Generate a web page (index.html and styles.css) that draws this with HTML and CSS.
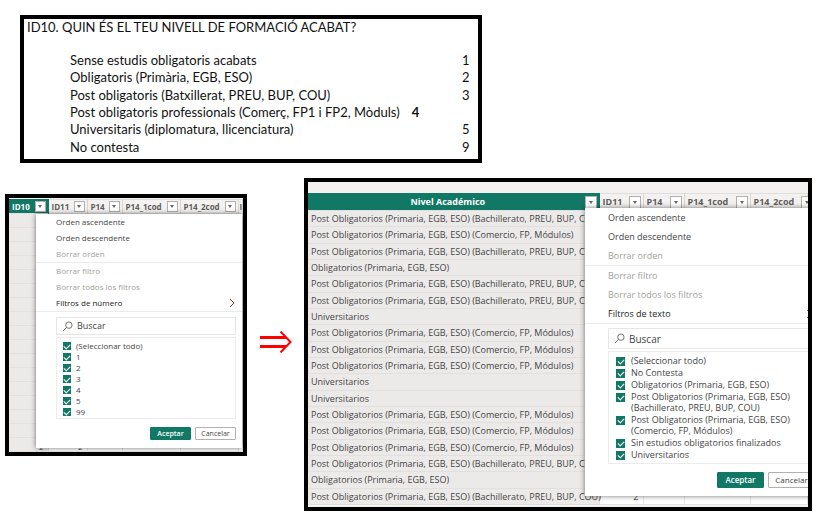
FILE: index.html
```
<!DOCTYPE html>
<html lang="ca">
<head>
<meta charset="utf-8">
<title>Nivell de formació</title>
<link rel="stylesheet" href="styles.css">
</head>
<body>
<section class="question">
  <h1>ID10. QUIN ÉS EL TEU NIVELL DE FORMACIÓ ACABAT?</h1>
  <table class="answers">
    <tr><td>Sense estudis obligatoris acabats</td><td>1</td></tr>
    <tr><td>Obligatoris (Primària, EGB, ESO)</td><td>2</td></tr>
    <tr><td>Post obligatoris (Batxillerat, PREU, BUP, COU)</td><td>3</td></tr>
    <tr><td colspan="2" class="inline-code">Post obligatoris professionals (Comerç, FP1 i FP2, Mòduls)<b>4</b></td></tr>
    <tr><td>Universitaris (diplomatura, llicenciatura)</td><td>5</td></tr>
    <tr><td>No contesta</td><td>9</td></tr>
  </table>
</section>

<main class="compare" lang="es">
  <section class="panel before">
    <table class="grid">
      <colgroup><col class="c-id"><col class="c-id11"><col class="c-p14"><col class="c-cod"><col class="c-cod"><col></colgroup>
      <thead><tr>
        <th class="active"><div><span>ID10</span><button class="drop" aria-label="Filtrar ID10"></button></div></th>
        <th><div><span>ID11</span><button class="drop" aria-label="Filtrar ID11"></button></div></th>
        <th><div><span>P14</span><button class="drop" aria-label="Filtrar P14"></button></div></th>
        <th><div><span>P14_1cod</span><button class="drop" aria-label="Filtrar P14_1cod"></button></div></th>
        <th><div><span>P14_2cod</span><button class="drop" aria-label="Filtrar P14_2cod"></button></div></th>
        <th class="cut"><div><span>I</span></div></th>
      </tr></thead>
      <tbody>
        <tr><td></td><td></td><td></td><td></td><td></td><td></td></tr>
        <tr><td></td><td></td><td></td><td></td><td></td><td></td></tr>
        <tr><td></td><td></td><td></td><td></td><td></td><td></td></tr>
        <tr><td></td><td></td><td></td><td></td><td></td><td></td></tr>
        <tr><td></td><td></td><td></td><td></td><td></td><td></td></tr>
        <tr><td></td><td></td><td></td><td></td><td></td><td></td></tr>
        <tr><td></td><td></td><td></td><td></td><td></td><td></td></tr>
        <tr><td></td><td></td><td></td><td></td><td></td><td></td></tr>
        <tr><td></td><td></td><td></td><td></td><td></td><td></td></tr>
        <tr><td></td><td></td><td></td><td></td><td></td><td></td></tr>
        <tr><td></td><td></td><td></td><td></td><td></td><td></td></tr>
        <tr><td></td><td></td><td></td><td></td><td></td><td></td></tr>
        <tr><td></td><td></td><td></td><td></td><td></td><td></td></tr>
        <tr><td></td><td></td><td></td><td></td><td></td><td></td></tr>
        <tr><td></td><td></td><td></td><td></td><td></td><td></td></tr>
        <tr><td></td><td></td><td></td><td></td><td></td><td></td></tr>
        <tr><td>2</td><td>2</td><td></td><td></td><td></td><td></td></tr>
      </tbody>
    </table>
    <div class="menu">
      <div class="group">
        <button class="item">Orden ascendente</button>
        <button class="item">Orden descendente</button>
        <button class="item" disabled>Borrar orden</button>
      </div>
      <div class="group">
        <button class="item" disabled>Borrar filtro</button>
        <button class="item" disabled>Borrar todos los filtros</button>
        <button class="item strong">Filtros de número
          <svg class="chevron" viewBox="0 0 6 10"><path d="M1 1l4 4-4 4"/></svg></button>
      </div>
      <div class="filter">
        <label class="search">
          <svg viewBox="0 0 12 12"><circle cx="7.5" cy="4.5" r="3.5"/><path d="M5 7L1 11"/></svg>
          <input type="text" placeholder="Buscar" aria-label="Buscar">
        </label>
        <div class="options">
          <label><input type="checkbox" checked>(Seleccionar todo)</label>
          <label><input type="checkbox" checked>1</label>
          <label><input type="checkbox" checked>2</label>
          <label><input type="checkbox" checked>3</label>
          <label><input type="checkbox" checked>4</label>
          <label><input type="checkbox" checked>5</label>
          <label><input type="checkbox" checked>99</label>
        </div>
        <div class="actions"><button class="primary">Aceptar</button><button>Cancelar</button></div>
      </div>
    </div>
  </section>

  <svg class="arrow" viewBox="0 0 32 22"><path d="M0 6.5H26M0 15.5H26"/><path class="tip" d="M20.500 .5L30.500 11 20.500 21.500"/></svg>

  <section class="panel after">
    <table class="grid">
      <colgroup><col class="c-id"><col class="c-id11"><col class="c-p14"><col class="c-cod"><col></colgroup>
      <thead><tr>
        <th class="active"><div><span>Nivel Académico</span><button class="drop" aria-label="Filtrar Nivel Académico"></button></div></th>
        <th><div><span>ID11</span><button class="drop" aria-label="Filtrar ID11"></button></div></th>
        <th><div><span>P14</span><button class="drop" aria-label="Filtrar P14"></button></div></th>
        <th><div><span>P14_1cod</span><button class="drop" aria-label="Filtrar P14_1cod"></button></div></th>
        <th class="cut"><div><span>P14_2cod</span><button class="drop" aria-label="Filtrar P14_2cod"></button></div></th>
      </tr></thead>
      <tbody>
        <tr><td>Post Obligatorios (Primaria, EGB, ESO) (Bachillerato, PREU, BUP, COU)</td><td></td><td></td><td></td><td></td></tr>
        <tr><td>Post Obligatorios (Primaria, EGB, ESO) (Comercio, FP, Módulos)</td><td></td><td></td><td></td><td></td></tr>
        <tr><td>Post Obligatorios (Primaria, EGB, ESO) (Bachillerato, PREU, BUP, COU)</td><td></td><td></td><td></td><td></td></tr>
        <tr><td>Obligatorios (Primaria, EGB, ESO)</td><td></td><td></td><td></td><td></td></tr>
        <tr><td>Post Obligatorios (Primaria, EGB, ESO) (Bachillerato, PREU, BUP, COU)</td><td></td><td></td><td></td><td></td></tr>
        <tr><td>Post Obligatorios (Primaria, EGB, ESO) (Bachillerato, PREU, BUP, COU)</td><td></td><td></td><td></td><td></td></tr>
        <tr><td>Universitarios</td><td></td><td></td><td></td><td></td></tr>
        <tr><td>Post Obligatorios (Primaria, EGB, ESO) (Comercio, FP, Módulos)</td><td></td><td></td><td></td><td></td></tr>
        <tr><td>Post Obligatorios (Primaria, EGB, ESO) (Comercio, FP, Módulos)</td><td></td><td></td><td></td><td></td></tr>
        <tr><td>Post Obligatorios (Primaria, EGB, ESO) (Comercio, FP, Módulos)</td><td></td><td></td><td></td><td></td></tr>
        <tr><td>Universitarios</td><td></td><td></td><td></td><td></td></tr>
        <tr><td>Universitarios</td><td></td><td></td><td></td><td></td></tr>
        <tr><td>Post Obligatorios (Primaria, EGB, ESO) (Comercio, FP, Módulos)</td><td></td><td></td><td></td><td></td></tr>
        <tr><td>Post Obligatorios (Primaria, EGB, ESO) (Comercio, FP, Módulos)</td><td></td><td></td><td></td><td></td></tr>
        <tr><td>Post Obligatorios (Primaria, EGB, ESO) (Comercio, FP, Módulos)</td><td></td><td></td><td></td><td></td></tr>
        <tr><td>Post Obligatorios (Primaria, EGB, ESO) (Bachillerato, PREU, BUP, COU)</td><td></td><td></td><td></td><td></td></tr>
        <tr><td>Obligatorios (Primaria, EGB, ESO)</td><td></td><td></td><td></td><td></td></tr>
        <tr><td>Post Obligatorios (Primaria, EGB, ESO) (Bachillerato, PREU, BUP, COU)</td><td>2</td><td></td><td></td><td></td></tr>
      </tbody>
    </table>
    <div class="menu">
      <div class="group">
        <button class="item">Orden ascendente</button>
        <button class="item">Orden descendente</button>
        <button class="item" disabled>Borrar orden</button>
      </div>
      <div class="group">
        <button class="item" disabled>Borrar filtro</button>
        <button class="item" disabled>Borrar todos los filtros</button>
        <button class="item strong">Filtros de texto
          <svg class="chevron" viewBox="0 0 6 10"><path d="M1 1l4 4-4 4"/></svg></button>
      </div>
      <div class="filter">
        <label class="search">
          <svg viewBox="0 0 12 12"><circle cx="7.5" cy="4.5" r="3.5"/><path d="M5 7L1 11"/></svg>
          <input type="text" placeholder="Buscar" aria-label="Buscar">
        </label>
        <div class="options">
          <label><input type="checkbox" checked>(Seleccionar todo)</label>
          <label><input type="checkbox" checked>No Contesta</label>
          <label><input type="checkbox" checked>Obligatorios (Primaria, EGB, ESO)</label>
          <label><input type="checkbox" checked><span>Post Obligatorios (Primaria, EGB, ESO)<br>(Bachillerato, PREU, BUP, COU)</span></label>
          <label><input type="checkbox" checked><span>Post Obligatorios (Primaria, EGB, ESO)<br>(Comercio, FP, Módulos)</span></label>
          <label><input type="checkbox" checked>Sin estudios obligatorios finalizados</label>
          <label><input type="checkbox" checked>Universitarios</label>
        </div>
        <div class="actions"><button class="primary">Aceptar</button><button>Cancelar</button></div>
      </div>
    </div>
  </section>
</main>
</body>
</html>
```
FILE: styles.css
```
* { box-sizing: border-box; }

body {
  margin: 0;
  padding: 15px 23px 20px 5px;
  background: #fff;
  color: #444;
  font: 9px/16px "Open Sans", sans-serif;
}

button, input { font: inherit; color: inherit; margin: 0; padding: 0; }
table { border-collapse: collapse; border-spacing: 0; }

/* Survey question */
.question {
  width: 57.2%;
  margin-left: 15px;
  padding: 0 8px 3px 3px;
  border: 4px solid #000;
  color: #111;
  font: 13px/17px Lato, sans-serif;
}
.question h1 { margin: 0 0 16px; font: inherit; }
.answers { width: calc(100% - 43px); height: 104px; margin-left: 43px; }
.answers td { padding: 0; white-space: nowrap; }
.answers td:last-child { text-align: right; }
.answers .inline-code:last-child { text-align: left; }
.inline-code b { margin-left: 12px; }

/* Before / after comparison */
.compare {
  display: grid;
  grid-template-columns: 242fr 57fr 508fr;
  align-items: start;
  margin-top: 15px;
}
.panel { position: relative; overflow: hidden; border: 4px solid #000; background: #f3f2f1; }
.before { margin-top: 16px; padding-top: 1px; font-size: 8px; line-height: 10px; }
.after { padding-top: 11px; padding-bottom: 2px; }

.arrow { width: 32px; height: 22px; margin: 153px auto 0; fill: none; stroke: #f00; stroke-width: 3; }
.arrow .tip { stroke-width: 2; }

/* Data grid */
.grid { width: 100%; table-layout: fixed; }
.grid th {
  padding: 0;
  background: #f3f2f1;
  border-top: 1px solid #e1dfdd;
  border-right: 1px solid #d8d6d4;
  color: #605e5c;
  text-align: left;
}
.grid th div { display: flex; align-items: center; justify-content: space-between; padding: 0 2px 0 3px; }
.grid th.active { background: #117865; border-color: #117865; color: #fff; }
.grid td { padding: 0 4px; background: #fff; border: 1px solid #e6e4e2; text-align: right; white-space: nowrap; }
.grid td:first-child { background: #eceae9; border-color: #e2e0de; border-left: 0; }
.drop {
  display: flex;
  flex: none;
  align-items: center;
  justify-content: center;
  width: 11px;
  height: 11px;
  border: 1px solid #b3b0ad;
  background: #fff;
}
.drop::after { content: ""; border: 2px solid transparent; border-top: 3px solid #666; border-bottom: 0; }

.before th { height: 14px; }
.before .cut div { padding: 0 1px; }
.before td { height: 14px; line-height: 8px; vertical-align: bottom; }
.before .c-id { width: 39px; }
.before .c-id11 { width: 39px; }
.before .c-p14 { width: 35px; }
.before .c-cod { width: 58px; }

.after .grid { height: 312px; }
.after th { height: 16px; }
.after td { height: 16px; padding-top: 1px; line-height: 14px; }
.after td:first-child { padding: 1px 2px 0 3px; text-align: left; }
.after .active span { flex: 1; text-align: center; }
.after .drop { width: 12px; height: 13px; }
.after .cut div { justify-content: flex-start; gap: 7px; }
.after .c-id { width: 291px; }
.after .c-id11 { width: 44px; }
.after .c-p14 { width: 41px; }
.after .c-cod { width: 66px; }

/* Filter menu */
.menu { position: absolute; background: #fff; box-shadow: 0 0 5px rgba(0, 0, 0, .55); }
.before .menu { top: 16px; left: 27px; right: 1px; }
.after .menu { top: 26px; left: 277px; right: -14px; }
.group { border-bottom: 1px solid #ececec; }
.item {
  display: flex;
  align-items: center;
  justify-content: space-between;
  width: 100%;
  border: 0;
  background: none;
  text-align: left;
}
.item:disabled { color: #a19f9d; }
.item.strong { color: #222; }
.before .item { height: 16px; padding: 0 7px 0 20px; }
.after .item { height: 19px; padding: 0 10px 0 23px; }
.chevron { width: 6px; height: 10px; fill: none; stroke: #a4262c; }
.after .chevron { stroke: #666; }

.before .filter { padding: 5px 6px 8px 20px; }
.after .filter { padding: 4px 7px 8px 23px; }
.search { display: flex; align-items: center; gap: 4px; border: 1px solid #e6e6e6; padding-left: 5px; }
.search svg { width: 11px; height: 11px; fill: none; stroke: #666; }
.search input { flex: 1; min-width: 0; border: 0; outline: 0; background: none; }
.search input::placeholder { color: #444; opacity: 1; }
.before .search { height: 18px; font-size: 9px; }
.after .search { height: 21px; font-size: 10px; }
.options { display: flex; flex-direction: column; margin-top: 2px; border: 1px solid #ececec; padding: 3px 6px; }
.options label { display: flex; align-items: flex-start; gap: 6px; }
.before .options { height: 82px; padding-top: 2px; line-height: 11px; }
.before .options label { gap: 5px; }
.after .options { height: 113px; gap: 1px; padding: 3px 7px; line-height: 11px; }
.options input {
  display: flex;
  flex: none;
  justify-content: center;
  appearance: none;
  width: 8px;
  height: 8px;
  margin-top: 2px;
  background: #117865;
}
.after .options input { width: 9px; height: 9px; }
.options input::after {
  content: "";
  width: 3px;
  height: 5px;
  margin-top: 1px;
  border: solid #fff;
  border-width: 0 1px 1px 0;
  transform: rotate(45deg);
}
.actions { display: flex; justify-content: flex-end; gap: 4px; margin-top: 8px; }
.actions button { border: 1px solid #b3b0ad; border-radius: 1px; background: #fff; }
.actions .primary { border-color: #117865; background: #117865; color: #fff; font-weight: 600; }
.before .actions button { width: 41px; height: 13px; font-size: 7px; line-height: 10px; }
.after .actions button { width: 47px; height: 16px; font-size: 8px; line-height: 12px; }
```
